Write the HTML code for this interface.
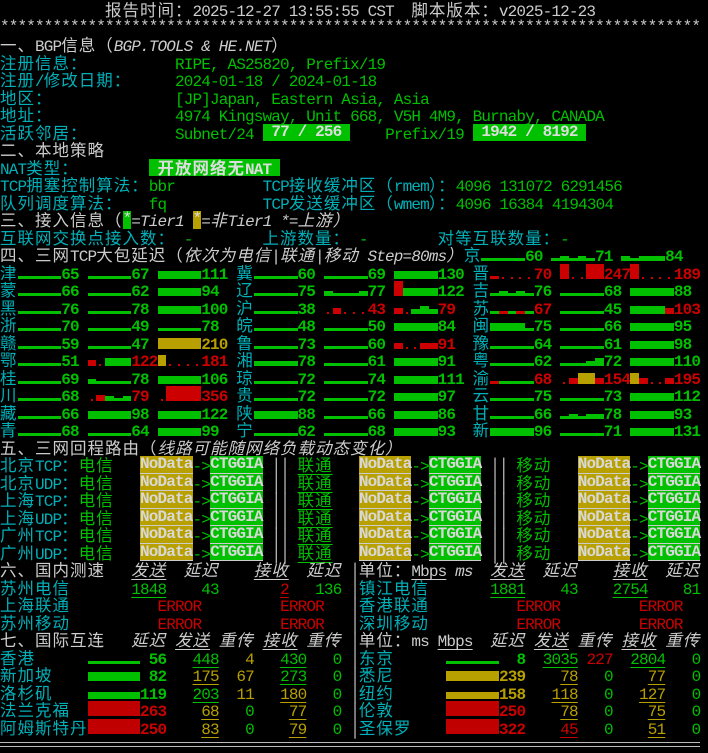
<!DOCTYPE html>
<html><head><meta charset="utf-8">
<style>
html,body{margin:0;padding:0;background:#000;}
body{width:708px;height:753px;overflow:hidden;position:relative;}
#t{position:absolute;left:0;top:1px;font-family:"Liberation Mono",monospace;font-size:16px;letter-spacing:-0.85px;color:#ccc;}
#t>div{height:17.5px;line-height:17.5px;white-space:pre;overflow:visible;}
k{font-family:"Noto Sans CJK SC","WenQuanYi Zen Hei",sans-serif;font-size:16.5px;letter-spacing:1px;font-weight:normal;line-height:17.5px;}
.cy{color:#00b0b8;}
.g{color:#00c000;}
.r{color:#cc0000;}
.y{color:#b8a000;}
.w{color:#ccc;}
.it{font-style:italic;}
.u{text-decoration:underline;text-underline-offset:3px;}
.bx{display:inline-block;height:17.5px;vertical-align:top;background:#00c000;color:#ddd;font-weight:bold;}
.bx k{font-weight:bold;}
.gb{background:#00c000;color:#ddd;display:inline-block;height:17.5px;vertical-align:top;}
.yb{background:#b8a000;color:#ddd;display:inline-block;height:17.5px;vertical-align:top;}
.nd{background:#b8a000;color:#d8d8d8;font-weight:bold;display:inline-block;height:17.5px;vertical-align:top;box-shadow:inset 0 -1px #ccc;}
.ct{background:#00c000;color:#d8d8d8;font-weight:bold;display:inline-block;height:17.5px;vertical-align:top;box-shadow:inset 0 -1px #ccc;}
.s4{color:#00c000;font-weight:bold;}
i{display:inline-block;height:17.5px;vertical-align:top;width:8.75px;--c:#00c000;--h:3px;background-image:linear-gradient(var(--c),var(--c));background-repeat:no-repeat;background-size:100% var(--h);background-position:0 calc(15px - var(--h));}
i._{--h:3px}
i.b{--h:5px}
i.M{--h:8px}
i.Y{--h:11px;--c:#b8a000}
i.R{--h:15px;--c:#cc0000}
i.r{--h:6px;--c:#cc0000}
i.q{--h:3px;--c:#cc0000}
i.d{--c:#cc0000;background-size:2px 2px;background-position:3px 13px}
i.w5{width:43.75px}
i.w6{width:52.5px}
.hl{position:absolute;left:0;width:700px;height:1px;background:#bbb;}
</style></head><body>
<div id="t">
<div>            <k>报告时间：</k>2025-12-27 13:55:55 CST  <k>脚本版本：</k>v2025-12-23</div>
<div>********************************************************************************</div>
<div><k>一、</k>BGP<k>信息（</k><span class="it">BGP.TOOLS &amp; HE.NET</span><k>）</k></div>
<div><k class="cy">注册信息：</k>          <span class="g">RIPE, AS25820, Prefix/19</span></div>
<div><k class="cy">注册</k><span class="cy">/</span><k class="cy">修改日期：</k>     <span class="g">2024-01-18 / 2024-01-18</span></div>
<div><k class="cy">地区：</k>              <span class="g">[JP]Japan, Eastern Asia, Asia</span></div>
<div><k class="cy">地址：</k>              <span class="g">4974 Kingsway, Unit 668, V5H 4M9, Burnaby, CANADA</span></div>
<div><k class="cy">活跃邻居：</k>          <span class="g">Subnet/24 </span><span class="bx"> 77 / 256 </span>    <span class="g">Prefix/19 </span><span class="bx"> 1942 / 8192 </span></div>
<div><k>二、本地策略</k></div>
<div><span class="cy">NAT</span><k class="cy">类型：</k>        <span class="bx"> <k>开放网络无</k>NAT </span></div>
<div><span class="cy">TCP</span><k class="cy">拥塞控制算法：</k><span class="g">bbr</span>          <span class="cy">TCP</span><k class="cy">接收缓冲区（</k><span class="cy">rmem</span><k class="cy">）：</k><span class="g">4096 131072 6291456</span></div>
<div><k class="cy">队列调度算法：</k>   <span class="g">fq</span>           <span class="cy">TCP</span><k class="cy">发送缓冲区（</k><span class="cy">wmem</span><k class="cy">）：</k><span class="g">4096 16384 4194304</span></div>
<div><k>三、接入信息（</k><span class="gb">*</span><span class="it">=Tier1 </span><span class="yb">*</span><span class="it">=</span><k class="it">非</k><span class="it">Tier1 *=</span><k class="it">上游）</k></div>
<div><k class="cy">互联网交换点接入数：</k> <span class="g">-</span>        <k class="cy">上游数量：</k> <span class="g">-</span>        <k class="cy">对等互联数量：</k><span class="g">-</span></div>
<div><k>四、三网</k>TCP<k>大包延迟（</k><span class="it"><k class="it">依次为电信</k>|<k class="it">联通</k>|<k class="it">移动</k> Step=80ms</span><k class="it">）</k><span class="s4"><k class="cy">京</k><i class="_ w5"></i>60 <i class="_"></i><i class="b"></i><i class="_"></i><i class="b"></i><i class="_"></i>71 <i class="b"></i><i class="_"></i><i class="b"></i><i class="b"></i><i class="b"></i>84 </span></div>
<div class="s4"><k class="cy">津</k><i class="_ w5"></i>65 <i class="_ w5"></i>67 <i class="M w5"></i>111 <k class="cy">冀</k><i class="_ w5"></i>60 <i class="_ w5"></i>69 <i class="M w5"></i>130 <k class="cy">晋</k><i class="q"></i><i class="d"></i><i class="d"></i><i class="d"></i><i class="d"></i><span class="r">70 </span><i class="R"></i><i class="d"></i><i class="d"></i><i class="R"></i><i class="R"></i><span class="r">247</span><i class="R"></i><i class="d"></i><i class="d"></i><i class="d"></i><i class="d"></i><span class="r">189</span></div>
<div class="s4"><k class="cy">蒙</k><i class="_ w5"></i>66 <i class="_ w5"></i>62 <i class="M w5"></i>94  <k class="cy">辽</k><i class="_ w5"></i>75 <i class="b"></i><i class="_"></i><i class="_"></i><i class="_"></i><i class="b"></i>77 <i class="R"></i><i class="M"></i><i class="M"></i><i class="M"></i><i class="M"></i>122 <k class="cy">吉</k><i class="_"></i><i class="b"></i><i class="_"></i><i class="b"></i><i class="_"></i>76 <i class="_ w5"></i>68 <i class="M w5"></i>88 </div>
<div class="s4"><k class="cy">黑</k><i class="_ w5"></i>76 <i class="_ w5"></i>78 <i class="M w5"></i>100 <k class="cy">沪</k><i class="_ w5"></i>38 <i class="d"></i><i class="r"></i><i class="d"></i><i class="d"></i><i class="d"></i><span class="r">43 </span><i class="r"></i><i class="d"></i><i class="b"></i><i class="M"></i><i class="b"></i><span class="r">79 </span> <k class="cy">苏</k><i class="_"></i><i class="q"></i><i class="_"></i><i class="q"></i><i class="_"></i><span class="r">67 </span><i class="_ w5"></i>45 <i class="M"></i><i class="M"></i><i class="M"></i><i class="M"></i><i class="r"></i><span class="r">103</span></div>
<div class="s4"><k class="cy">浙</k><i class="_ w5"></i>70 <i class="_ w5"></i>49 <i class="_ w5"></i>78  <k class="cy">皖</k><i class="_ w5"></i>48 <i class="_ w5"></i>50 <i class="M w5"></i>84  <k class="cy">闽</k><i class="M"></i><i class="M"></i><i class="M"></i><i class="M"></i><i class="_"></i>75 <i class="_ w5"></i>66 <i class="M w5"></i>95 </div>
<div class="s4"><k class="cy">赣</k><i class="_ w5"></i>59 <i class="_ w5"></i>47 <i class="Y w5"></i><span class="y">210</span> <k class="cy">鲁</k><i class="_ w5"></i>73 <i class="_ w5"></i>60 <i class="r"></i><i class="d"></i><i class="d"></i><i class="r"></i><i class="r"></i><span class="r">91 </span> <k class="cy">豫</k><i class="_ w5"></i>64 <i class="_ w5"></i>61 <i class="M w5"></i>98 </div>
<div class="s4"><k class="cy">鄂</k><i class="_ w5"></i>51 <i class="r"></i><i class="d"></i><i class="M"></i><i class="M"></i><i class="M"></i><span class="r">122</span><i class="Y"></i><i class="d"></i><i class="d"></i><i class="d"></i><i class="d"></i><span class="r">181</span> <k class="cy">湘</k><i class="b"></i><i class="b"></i><i class="b"></i><i class="b"></i><i class="b"></i>78 <i class="_ w5"></i>61 <i class="M w5"></i>91  <k class="cy">粤</k><i class="_ w5"></i>62 <i class="_"></i><i class="_"></i><i class="_"></i><i class="b"></i><i class="M"></i>72 <i class="M w5"></i>110</div>
<div class="s4"><k class="cy">桂</k><i class="_ w5"></i>69 <i class="b"></i><i class="_"></i><i class="_"></i><i class="_"></i><i class="_"></i>78 <i class="M w5"></i>106 <k class="cy">琼</k><i class="_ w5"></i>72 <i class="_ w5"></i>74 <i class="M w5"></i>111 <k class="cy">渝</k><i class="q"></i><i class="_"></i><i class="_"></i><i class="_"></i><i class="_"></i><span class="r">68 </span><i class="d"></i><i class="r"></i><i class="Y"></i><i class="Y"></i><i class="r"></i><span class="r">154</span><i class="Y"></i><i class="r"></i><i class="d"></i><i class="d"></i><i class="r"></i><span class="r">195</span></div>
<div class="s4"><k class="cy">川</k><i class="_ w5"></i>68 <i class="d"></i><i class="r"></i><i class="b"></i><i class="_"></i><i class="b"></i><span class="r">79 </span><i class="d"></i><i class="R"></i><i class="R"></i><i class="R"></i><i class="R"></i><span class="r">356</span> <k class="cy">贵</k><i class="_ w5"></i>72 <i class="_ w5"></i>72 <i class="M w5"></i>97  <k class="cy">云</k><i class="_ w5"></i>75 <i class="_ w5"></i>73 <i class="M w5"></i>112</div>
<div class="s4"><k class="cy">藏</k><i class="_ w5"></i>66 <i class="M w5"></i>98 <i class="M w5"></i>122 <k class="cy">陕</k><i class="M w5"></i>88 <i class="_ w5"></i>66 <i class="M w5"></i>86  <k class="cy">甘</k><i class="_ w5"></i>66 <i class="_"></i><i class="b"></i><i class="_"></i><i class="b"></i><i class="b"></i>78 <i class="M w5"></i>93 </div>
<div class="s4"><k class="cy">青</k><i class="_ w5"></i>68 <i class="_ w5"></i>64 <i class="M w5"></i>99  <k class="cy">宁</k><i class="_ w5"></i>62 <i class="_ w5"></i>68 <i class="M w5"></i>93  <k class="cy">新</k><i class="M w5"></i>96 <i class="_ w5"></i>71 <i class="M w5"></i>131</div>
<div><k>五、三网回程路由（</k><k class="it">线路可能随网络负载动态变化）</k></div>
<div><k class="cy">北京</k><span class="cy">TCP</span><k class="cy">：</k><k class="g">电信</k>   <span class="nd">NoData</span><span class="g">-&gt;</span><span class="ct">CTGGIA</span> ││ <k class="g u">联通</k>   <span class="nd">NoData</span><span class="g">-&gt;</span><span class="ct">CTGGIA</span> ││ <k class="g">移动</k>   <span class="nd">NoData</span><span class="g">-&gt;</span><span class="ct">CTGGIA</span></div>
<div><k class="cy">北京</k><span class="cy">UDP</span><k class="cy">：</k><k class="g">电信</k>   <span class="nd">NoData</span><span class="g">-&gt;</span><span class="ct">CTGGIA</span> ││ <k class="g u">联通</k>   <span class="nd">NoData</span><span class="g">-&gt;</span><span class="ct">CTGGIA</span> ││ <k class="g">移动</k>   <span class="nd">NoData</span><span class="g">-&gt;</span><span class="ct">CTGGIA</span></div>
<div><k class="cy">上海</k><span class="cy">TCP</span><k class="cy">：</k><k class="g">电信</k>   <span class="nd">NoData</span><span class="g">-&gt;</span><span class="ct">CTGGIA</span> ││ <k class="g u">联通</k>   <span class="nd">NoData</span><span class="g">-&gt;</span><span class="ct">CTGGIA</span> ││ <k class="g">移动</k>   <span class="nd">NoData</span><span class="g">-&gt;</span><span class="ct">CTGGIA</span></div>
<div><k class="cy">上海</k><span class="cy">UDP</span><k class="cy">：</k><k class="g">电信</k>   <span class="nd">NoData</span><span class="g">-&gt;</span><span class="ct">CTGGIA</span> ││ <k class="g u">联通</k>   <span class="nd">NoData</span><span class="g">-&gt;</span><span class="ct">CTGGIA</span> ││ <k class="g">移动</k>   <span class="nd">NoData</span><span class="g">-&gt;</span><span class="ct">CTGGIA</span></div>
<div><k class="cy">广州</k><span class="cy">TCP</span><k class="cy">：</k><k class="g">电信</k>   <span class="nd">NoData</span><span class="g">-&gt;</span><span class="ct">CTGGIA</span> ││ <k class="g u">联通</k>   <span class="nd">NoData</span><span class="g">-&gt;</span><span class="ct">CTGGIA</span> ││ <k class="g">移动</k>   <span class="nd">NoData</span><span class="g">-&gt;</span><span class="ct">CTGGIA</span></div>
<div><k class="cy">广州</k><span class="cy">UDP</span><k class="cy">：</k><k class="g">电信</k>   <span class="nd">NoData</span><span class="g">-&gt;</span><span class="ct">CTGGIA</span> ││ <k class="g u">联通</k>   <span class="nd">NoData</span><span class="g">-&gt;</span><span class="ct">CTGGIA</span> ││ <k class="g">移动</k>   <span class="nd">NoData</span><span class="g">-&gt;</span><span class="ct">CTGGIA</span></div>
<div><k>六、国内测速</k>   <k class="it u">发送</k>  <k class="it">延迟</k>    <k class="it u">接收</k>  <k class="it">延迟</k> │<k>单位：</k><span class="u">Mbps</span> <span class="it">ms</span>  <k class="it u">发送</k>  <k class="it">延迟</k>    <k class="it u">接收</k>  <k class="it">延迟</k></div>
<div><k class="cy">苏州电信</k>       <span class="g u">1848</span>    <span class="g">43</span>       <span class="r u">2</span>   <span class="g">136</span> │<k class="cy">镇江电信</k>       <span class="g u">1881</span>    <span class="g">43</span>    <span class="g u">2754</span>    <span class="g">81</span></div>
<div><k class="cy">上海联通</k>          <span class="r">ERROR</span>         <span class="r">ERROR</span>   │<k class="cy">香港联通</k>          <span class="r">ERROR</span>         <span class="r">ERROR</span></div>
<div><k class="cy">苏州移动</k>          <span class="r">ERROR</span>         <span class="r">ERROR</span>   │<k class="cy">深圳移动</k>          <span class="r">ERROR</span>         <span class="r">ERROR</span></div>
<div><k>七、国际互连</k>   <k class="it">延迟</k> <k class="it u">发送</k> <k class="it">重传</k> <k class="it u">接收</k> <k class="it">重传</k> │<k>单位：</k>ms <span class="u">Mbps</span>  <k class="it">延迟</k> <k class="it u">发送</k> <k class="it">重传</k> <k class="it u">接收</k> <k class="it">重传</k></div>
<div><k class="cy">香港</k>      <i class="_ w6"></i><b class="g"> 56</b>   <span class="g u">448</span>   <span class="y">4</span>   <span class="g u">430</span>   <span class="g">0</span> │<k class="cy">东京</k>      <i class="_ w6"></i><b class="g">  8</b>  <span class="g u">3035</span> <span class="r">227</span>  <span class="g u">2804</span>   <span class="g">0</span></div>
<div><k class="cy">新加坡</k>    <i class="w6" style="--h:9px"></i><b class="g"> 82</b>   <span class="y u">175</span>  <span class="y">67</span>   <span class="g u">273</span>   <span class="g">0</span> │<k class="cy">悉尼</k>      <i class="w6" style="--h:10px;--c:#b8a000"></i><b class="y">239</b>    <span class="y u">78</span>   <span class="g">0</span>    <span class="y u">77</span>   <span class="g">0</span></div>
<div><k class="cy">洛杉矶</k>    <i class="w6" style="--h:7px"></i><b class="g">119</b>   <span class="g u">203</span>  <span class="y">11</span>   <span class="y u">180</span>   <span class="g">0</span> │<k class="cy">纽约</k>      <i class="w6" style="--h:7px;--c:#b8a000"></i><b class="y">158</b>   <span class="y u">118</span>   <span class="g">0</span>   <span class="y u">127</span>   <span class="g">0</span></div>
<div><k class="cy">法兰克福</k>  <i class="w6" style="--h:15px;--c:#c00000"></i><b class="r">263</b>    <span class="y u">68</span>   <span class="g">0</span>    <span class="y u">77</span>   <span class="g">0</span> │<k class="cy">伦敦</k>      <i class="w6" style="--h:15px;--c:#c00000"></i><b class="r">250</b>    <span class="y u">78</span>   <span class="g">0</span>    <span class="y u">75</span>   <span class="g">0</span></div>
<div><k class="cy">阿姆斯特丹</k><i class="w6" style="--h:15px;--c:#c00000"></i><b class="r">250</b>    <span class="y u">83</span>   <span class="g">0</span>    <span class="y u">79</span>   <span class="g">0</span> │<k class="cy">圣保罗</k>    <i class="w6" style="--h:15px;--c:#c00000"></i><b class="r">322</b>    <span class="r u">45</span>   <span class="g">0</span>    <span class="y u">51</span>   <span class="g">0</span></div>
</div>
<div class="hl" style="top:742px"></div>
<div class="hl" style="top:746px"></div>
</body></html>
